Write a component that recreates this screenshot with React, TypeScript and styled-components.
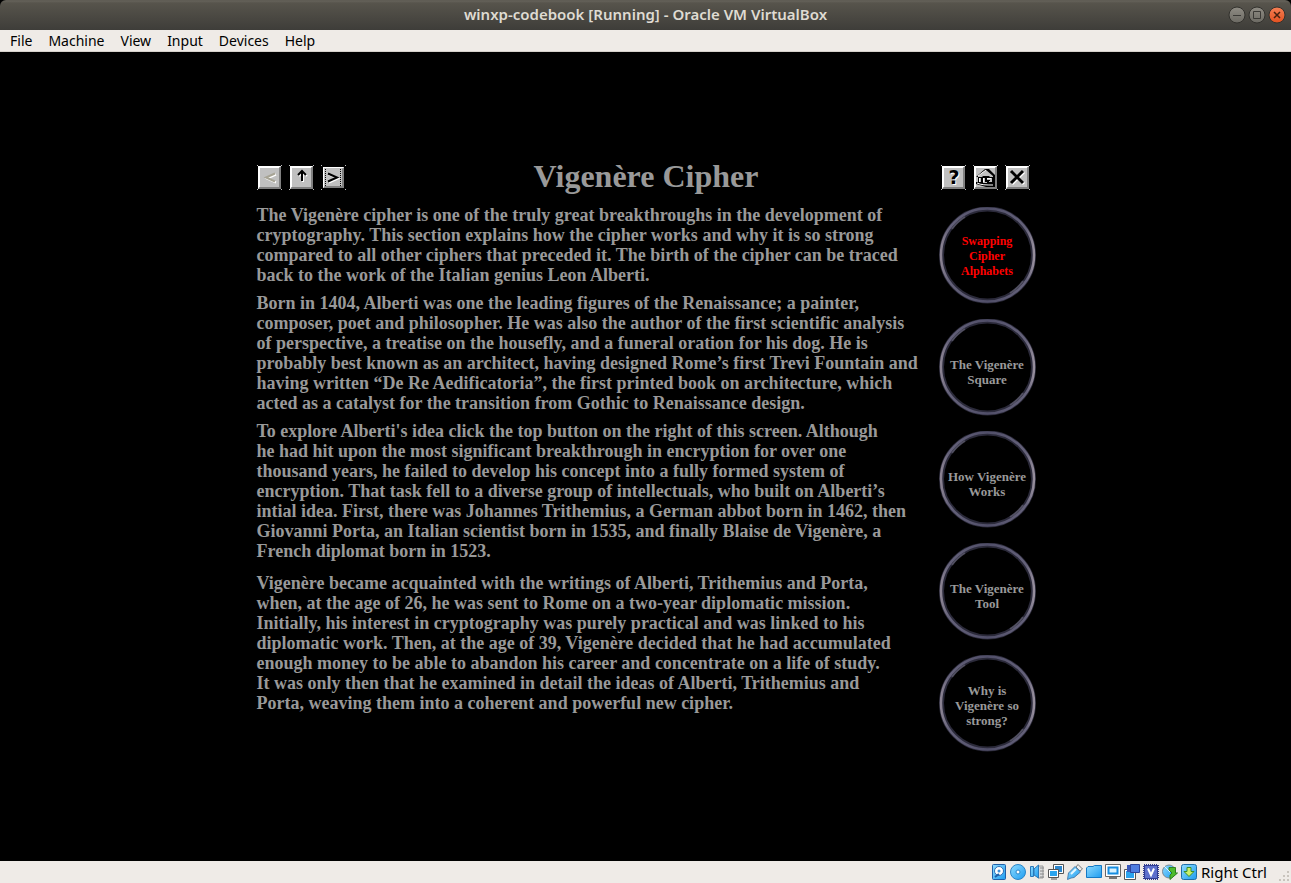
import React from 'react';
import styled, { createGlobalStyle } from 'styled-components';

const Global = createGlobalStyle`
  * { box-sizing: border-box; }
  body { margin: 0; background: #000; }
  button { font: inherit; padding: 0; margin: 0; cursor: pointer; }
`;

const Window = styled.div`
  min-height: 100vh;
  display: flex;
  flex-direction: column;
  background: #000;
  font-family: 'Noto Sans', 'Open Sans', sans-serif;
`;

const TitleBar = styled.header`
  height: 30px;
  display: grid;
  grid-template-columns: 1fr auto 1fr;
  align-items: center;
  padding: 0 5px;
  background: linear-gradient(#5b5850 0, #65625a 1px, #57544c 3px, #3e3d39 100%);
  border-radius: 6px 6px 0 0;
`;

const WindowTitle = styled.div`
  grid-column: 2;
  padding-bottom: 2px;
  color: #dfdbd2;
  font-size: 15px;
  line-height: 20px;
  font-weight: 600;
`;

const WindowControls = styled.div`
  display: flex;
  justify-content: flex-end;
  gap: 2px;
`;

const WindowControl = styled.button`
  width: 18px;
  height: 18px;
  border: 0;
  background: none;
  svg { display: block; }
`;

const MenuBar = styled.nav`
  height: 22px;
  display: flex;
  align-items: center;
  gap: 16px;
  padding: 0 10px;
  background: #efebe7;
  border-bottom: 1px solid #d5d1cb;
`;

const MenuItem = styled.button`
  border: 0;
  background: none;
  color: #000;
  font-size: 14px;
  line-height: 20px;
`;

const Screen = styled.main`
  flex: 1;
  display: flex;
  align-items: center;
  justify-content: center;
`;

const Guest = styled.div`
  width: 100%;
  max-width: 800px;
  min-height: 600px;
  padding: 4px 10px 0 11px;
  font-family: 'Liberation Serif', 'Times New Roman', serif;
  color: #999;
`;

const Header = styled.div`
  display: grid;
  grid-template-columns: 1fr auto 1fr;
  align-items: center;
  height: 34px;
`;

const NavGroup = styled.div<{ $end?: boolean }>`
  display: flex;
  gap: 7px;
  justify-content: ${(p) => (p.$end ? 'flex-end' : 'flex-start')};
  padding-right: ${(p) => (p.$end ? '6px' : '0')};
`;

const NavButton = styled.button`
  width: 25px;
  height: 25px;
  border: 0;
  background: #000;
  svg { display: block; }
`;

const Heading = styled.h1`
  margin: 0;
  padding-bottom: 4px;
  font-size: 32px;
  line-height: 30px;
  font-weight: 700;
`;

const Body = styled.div`
  display: flex;
  justify-content: space-between;
  align-items: flex-start;
  padding-top: 10px;
`;

const Article = styled.article`
  display: flex;
  flex-direction: column;
  gap: 8px;
`;

const Paragraph = styled.p<{ $spaced?: boolean }>`
  margin: 0;
  padding-top: ${(p) => (p.$spaced ? '4px' : '0')};
  font-size: 18px;
  line-height: 20px;
  font-weight: 700;
  white-space: nowrap;
`;

const Topics = styled.nav`
  display: flex;
  flex-direction: column;
  gap: 15px;
  padding-top: 2px;
`;

const Topic = styled.button<{ $active?: boolean }>`
  width: 97px;
  height: 97px;
  display: grid;
  place-items: center;
  border: 0;
  background: none;
  color: ${(p) => (p.$active ? '#f00' : '#999')};
  font-weight: 700;
  font-size: ${(p) => (p.$active ? '12px' : '13px')};
  line-height: 15px;
  > * { grid-area: 1 / 1; }
`;

const TopicLabel = styled.span<{ $drop: number }>`
  padding-top: ${(p) => p.$drop}px;
`;

const StatusBar = styled.footer`
  height: 22px;
  display: flex;
  align-items: center;
  justify-content: flex-end;
  gap: 3px;
  background: #efebe7;
  color: #000;
  font-size: 15px;
  line-height: 20px;
`;

const HostKey = styled.span`
  padding-left: 1px;
`;

const Grip = styled.svg`
  align-self: flex-end;
  margin-left: 8px;
`;

type ControlKind = 'minimize' | 'maximize' | 'close';

function ControlIcon({ kind }: { kind: ControlKind }) {
  const close = kind === 'close';
  return (
    <svg width="18" height="18" viewBox="0 0 18 18">
      <defs>
        <linearGradient id={'ctl-' + kind} x1="0" y1="0" x2="0" y2="1">
          <stop offset="0" stopColor={close ? '#f58055' : '#8f8c84'} />
          <stop offset="1" stopColor={close ? '#e2501f' : '#6b6962'} />
        </linearGradient>
      </defs>
      <circle cx="9" cy="9" r="8" fill={'url(#ctl-' + kind + ')'} stroke="#32312d" />
      <g fill="none" stroke={close ? '#45210f' : '#3a3935'}>
        {kind === 'minimize' && <path d="M5 9.500H13" />}
        {kind === 'maximize' && <path d="M5.500 5.500H12.500V12.500H5.500Z" />}
        {close && <path d="M6 6L12 12M12 6L6 12" strokeWidth="1.500" />}
      </g>
    </svg>
  );
}

type NavKind = 'back' | 'up' | 'next' | 'help' | 'home' | 'exit';

function Glyph({ d, color }: { d: string; color: string }) {
  return (
    <g fill="none" strokeWidth="2">
      <path d={d} stroke="#fff" transform="translate(1 1)" />
      <path d={d} stroke={color} />
    </g>
  );
}

function NavIcon({ kind }: { kind: NavKind }) {
  const focused = kind === 'next';
  const a = focused ? 2 : 1;
  const b = focused ? 23 : 24;
  return (
    <svg width="25" height="25" viewBox="0 0 25 25">
      <path d="M0 0h1v1H0zM24 0h1v1h-1zM0 24h1v1H0zM24 24h1v1h-1z" fill="#c0c0c0" />
      <rect x={a} y={a} width={b - a} height={b - a} fill="#c0c0c0" />
      <path d={`M${b} ${a}V${b}H${a}l2 -2H${b - 2}V${a + 2}z`} fill="#808080" />
      <path d={`M${a} ${b}V${a}H${b}l-1 1H${a + 1}V${b - 1}z`} fill="#fff" />
      {!focused && <path d="M2 22V2H22V3H3V22z" fill="#fff" />}
      {kind === 'back' && <Glyph d="M18 8.500L9 12.500L18 16.500" color="#a7a495" />}
      {kind === 'up' && <Glyph d="M13 16V6M9 10L13 6L17 10" color="#000" />}
      {kind === 'next' && (
        <>
          <Glyph d="M7 8.500L16 12.500L7 16.500" color="#000" />
          <path d="M4.500 4V21M19.500 4V21" stroke="#000" strokeDasharray="1 1" />
        </>
      )}
      {kind === 'help' && (
        <g fontFamily="DejaVu Sans" fontWeight="700" fontSize="19" textAnchor="middle">
          <text x="14" y="20" fill="#fff">?</text>
          <text x="13" y="19" fill="#000">?</text>
        </g>
      )}
      {kind === 'home' && (
        <>
          <path d="M3 12L12 4H16L22 10V22H13L3 19V17H5V12z" fill="#000" />
          <path d="M5 11L13 5L20 11V12H17L16 11H10L9 12H5z" fill="#c0c0c0" />
          <path d="M5 11L13 5" stroke="#fff" />
          <path d="M6 13H8V17H6zM10 13H12V17H14V18H10zM14 13H19V17H16V16H17V15H14z" fill="#c0c0c0" />
          <path d="M6.500 13V17M10.500 13V17M14 13.500H18" stroke="#fff" />
          <path d="M4 18C8 20 13 20 20 20" stroke="#fff" fill="none" />
        </>
      )}
      {kind === 'exit' && (
        <g fill="none" strokeWidth="3">
          <path d="M7 7L19 19M19 7L7 19" stroke="#fff" />
          <path d="M6 6L18 18M18 6L6 18" stroke="#000" />
        </g>
      )}
    </svg>
  );
}

function Ring() {
  return (
    <svg width="97" height="97" viewBox="0 0 97 97" aria-hidden="true">
      <defs>
        <linearGradient id="ring" x1="0" y1="0" x2="1" y2="0">
          <stop offset="0" stopColor="#8b8392" />
          <stop offset="0.080" stopColor="#65627a" />
          <stop offset="0.500" stopColor="#504e68" />
          <stop offset="0.920" stopColor="#65627a" />
          <stop offset="1" stopColor="#978f9d" />
        </linearGradient>
      </defs>
      <g fill="none">
        <circle cx="48.500" cy="48" r="46" stroke="#2b2a3a" strokeWidth="5" />
        <circle cx="48.500" cy="48" r="46.500" stroke="url(#ring)" strokeWidth="2.500" />
        <path
          d="M13 22A44 44 0 0 1 26 10M84 74A44 44 0 0 1 71 86"
          stroke="#77758a"
          strokeWidth="2"
          strokeOpacity="0.500"
        />
      </g>
    </svg>
  );
}

type StatusKind =
  | 'disk' | 'optical' | 'audio' | 'network' | 'usb' | 'folder'
  | 'display' | 'record' | 'cpu' | 'mouse' | 'keyboard';

function StatusIcon({ kind }: { kind: StatusKind }) {
  return (
    <svg width="16" height="16" viewBox="0 0 16 16" role="img" aria-label={kind}>
      <defs>
        <linearGradient id="sky" x1="0" y1="0" x2="1" y2="1">
          <stop offset="0" stopColor="#8fdcff" />
          <stop offset="1" stopColor="#1d9cf0" />
        </linearGradient>
      </defs>
      {kind === 'disk' && (
        <>
          <rect x="1.500" y="0.500" width="13" height="15" rx="1" fill="url(#sky)" stroke="#1f5fa8" />
          <circle cx="8" cy="7" r="4.500" fill="#fff" stroke="#2d6fb5" />
          <circle cx="8" cy="7" r="1.500" fill="#3c8fd8" />
          <path d="M4 13L8 10" stroke="#1f5fa8" strokeWidth="2" />
        </>
      )}
      {kind === 'optical' && (
        <>
          <circle cx="8" cy="8" r="7.500" fill="url(#sky)" stroke="#2a86c8" />
          <circle cx="8" cy="8" r="2" fill="#fff" stroke="#2a86c8" />
        </>
      )}
      {kind === 'audio' && (
        <>
          <path d="M9 2H14V14H9z" fill="#ddd" stroke="#999" />
          <path d="M11 4H15M11 7H15M11 10H15M11 13H15" stroke="#888" />
          <path d="M1.500 2.500H4.500V12.500H1.500zM5 5L9.500 1V14L5 11z" fill="url(#sky)" stroke="#2a78b8" />
        </>
      )}
      {kind === 'network' && (
        <>
          <path d="M5.500 0.500H15.500V9.500H5.500z" fill="#fff" stroke="#555" />
          <path d="M7 2H14V8H7z" fill="#2c86cc" />
          <path d="M0.500 5.500H10.500V13.500H0.500z" fill="#fff" stroke="#555" />
          <path d="M2 7H9V12H2z" fill="#2ba4ee" />
          <path d="M3 15H9" stroke="#555" />
        </>
      )}
      {kind === 'usb' && (
        <>
          <path d="M9 3L11 0.500L15.500 5L13 7z" fill="#eee" stroke="#777" />
          <path d="M1.500 9L8 2.500L13.500 8L7 13.500L4 14L0.500 15.500z" fill="url(#sky)" stroke="#4a7fae" />
          <path d="M4 10L9 5" stroke="#e8f8ff" strokeWidth="2" />
        </>
      )}
      {kind === 'folder' && (
        <path d="M0.500 13.500V4L2 2.500H7L8.500 1.500H15.500V13.500z" fill="url(#sky)" stroke="#1479c4" />
      )}
      {kind === 'display' && (
        <>
          <path d="M0.500 0.500H15.500V12.500H0.500z" fill="#fff" stroke="#666" />
          <path d="M3.500 3.500H12.500V9.500H3.500z" fill="#d9f3ff" stroke="#168de0" strokeWidth="2" />
          <path d="M4 14H12" stroke="#777" strokeWidth="2" />
        </>
      )}
      {kind === 'record' && (
        <>
          <path d="M0.500 5.500H11.500V15.500H0.500z" fill="#fff" stroke="#555" />
          <path d="M2 7H10V14H2z" fill="#2ba4ee" />
          <path d="M3 1H6V8H3z" fill="#3958b8" />
          <path d="M6.500 0.500H15.500V8.500H6.500z" fill="#4f7de0" stroke="#2d449a" />
        </>
      )}
      {kind === 'cpu' && (
        <>
          <rect x="1" y="1" width="14" height="14" fill="none" stroke="#303c90" strokeWidth="2" strokeDasharray="1 1" />
          <rect x="1.500" y="1.500" width="13" height="13" fill="#5d70cc" stroke="#303c90" />
          <path d="M5 4.500L8 11L11 4.500" fill="none" stroke="#fff" strokeWidth="2" />
        </>
      )}
      {kind === 'mouse' && (
        <>
          <circle cx="7" cy="7.500" r="6.500" fill="url(#sky)" stroke="#7a8790" />
          <path d="M2 2L8 8" stroke="#dff5ff" />
          <path d="M7 3.500H13.500V9H15.500L8 15.500V11L10 9L7 6z" fill="#4ebc2c" stroke="#2e7f20" />
        </>
      )}
      {kind === 'keyboard' && (
        <>
          <rect x="0.500" y="0.500" width="15" height="15" rx="2" fill="url(#sky)" stroke="#1d6ea8" />
          <path d="M6 3.500H10V7.500H13L8 12.500L3 7.500H6z" fill="#c9f06a" stroke="#388e2c" />
        </>
      )}
    </svg>
  );
}

const menus = ['File', 'Machine', 'View', 'Input', 'Devices', 'Help'];

const controls: ControlKind[] = ['minimize', 'maximize', 'close'];

const backNav: NavKind[] = ['back', 'up', 'next'];
const endNav: NavKind[] = ['help', 'home', 'exit'];

const paragraphs: string[][] = [
  [
    'The Vigenère cipher is one of the truly great breakthroughs in the development of',
    'cryptography. This section explains how the cipher works and why it is so strong',
    'compared to all other ciphers that preceded it. The birth of the cipher can be traced',
    'back to the work of the Italian genius Leon Alberti.',
  ],
  [
    'Born in 1404, Alberti was one the leading figures of the Renaissance; a painter,',
    'composer, poet and philosopher. He was also the author of the first scientific analysis',
    'of perspective, a treatise on the housefly, and a funeral oration for his dog. He is',
    'probably best known as an architect, having designed Rome’s first Trevi Fountain and',
    'having written “De Re Aedificatoria”, the first printed book on architecture, which',
    'acted as a catalyst for the transition from Gothic to Renaissance design.',
  ],
  [
    "To explore Alberti's idea click the top button on the right of this screen. Although",
    'he had hit upon the most significant breakthrough in encryption for over one',
    'thousand years, he failed to develop his concept into a fully formed system of',
    'encryption. That task fell to a diverse group of intellectuals, who built on Alberti’s',
    'intial idea. First, there was Johannes Trithemius, a German abbot born in 1462, then',
    'Giovanni Porta, an Italian scientist born in 1535, and finally Blaise de Vigenère, a',
    'French diplomat born in 1523.',
  ],
  [
    'Vigenère became acquainted with the writings of Alberti, Trithemius and Porta,',
    'when, at the age of 26, he was sent to Rome on a two-year diplomatic mission.',
    'Initially, his interest in cryptography was purely practical and was linked to his',
    'diplomatic work. Then, at the age of 39, Vigenère decided that he had accumulated',
    'enough money to be able to abandon his career and concentrate on a life of study.',
    'It was only then that he examined in detail the ideas of Alberti, Trithemius and',
    'Porta, weaving them into a coherent and powerful new cipher.',
  ],
];

const topics: { lines: string[]; drop: number }[] = [
  { lines: ['Swapping', 'Cipher', 'Alphabets'], drop: 2 },
  { lines: ['The Vigenère', 'Square'], drop: 10 },
  { lines: ['How Vigenère', 'Works'], drop: 10 },
  { lines: ['The Vigenère', 'Tool'], drop: 10 },
  { lines: ['Why is', 'Vigenère so', 'strong?'], drop: 4 },
];

const statusIcons: StatusKind[] = [
  'disk', 'optical', 'audio', 'network', 'usb', 'folder',
  'display', 'record', 'cpu', 'mouse', 'keyboard',
];

function Lines({ lines }: { lines: string[] }) {
  return (
    <>
      {lines.map((line, i) => (
        <React.Fragment key={i}>
          {i > 0 && <br />}
          {line}
        </React.Fragment>
      ))}
    </>
  );
}

export default function App() {
  return (
    <Window>
      <Global />
      <TitleBar>
        <WindowTitle>winxp-codebook [Running] - Oracle VM VirtualBox</WindowTitle>
        <WindowControls>
          {controls.map((kind) => (
            <WindowControl key={kind} aria-label={kind}>
              <ControlIcon kind={kind} />
            </WindowControl>
          ))}
        </WindowControls>
      </TitleBar>
      <MenuBar>
        {menus.map((name) => (
          <MenuItem key={name}>{name}</MenuItem>
        ))}
      </MenuBar>
      <Screen>
        <Guest>
          <Header>
            <NavGroup>
              {backNav.map((kind) => (
                <NavButton key={kind} aria-label={kind} disabled={kind === 'back'}>
                  <NavIcon kind={kind} />
                </NavButton>
              ))}
            </NavGroup>
            <Heading>Vigenère Cipher</Heading>
            <NavGroup $end>
              {endNav.map((kind) => (
                <NavButton key={kind} aria-label={kind}>
                  <NavIcon kind={kind} />
                </NavButton>
              ))}
            </NavGroup>
          </Header>
          <Body>
            <Article>
              {paragraphs.map((lines, i) => (
                <Paragraph key={i} $spaced={i === 3}>
                  <Lines lines={lines} />
                </Paragraph>
              ))}
            </Article>
            <Topics>
              {topics.map(({ lines, drop }, i) => (
                <Topic key={i} $active={i === 0}>
                  <Ring />
                  <TopicLabel $drop={drop}>
                    <Lines lines={lines} />
                  </TopicLabel>
                </Topic>
              ))}
            </Topics>
          </Body>
        </Guest>
      </Screen>
      <StatusBar>
        {statusIcons.map((kind) => (
          <StatusIcon key={kind} kind={kind} />
        ))}
        <HostKey>Right Ctrl</HostKey>
        <Grip width="13" height="13" viewBox="0 0 13 13" aria-hidden="true">
          <path
            d="M9 1h2v2H9zM5 5h2v2H5zM9 5h2v2H9zM1 9h2v2H1zM5 9h2v2H5zM9 9h2v2H9z"
            fill="#c9c4bd"
          />
        </Grip>
      </StatusBar>
    </Window>
  );
}
